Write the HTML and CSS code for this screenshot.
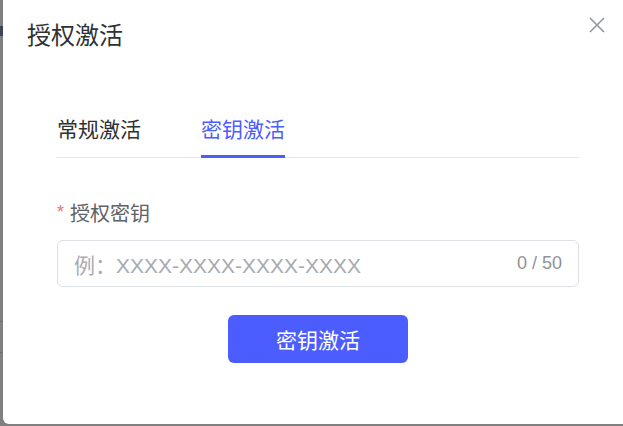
FILE: index.html
```html
<!DOCTYPE html>
<html lang="zh">
<head>
<meta charset="utf-8">
<title>授权激活</title>
<link rel="stylesheet" href="styles.css">
</head>
<body>
<div class="backdrop">
  <span class="bg-arrow"></span>
  <span class="bg-line bg-line-1"></span>
  <span class="bg-line bg-line-2"></span>
</div>
<div class="dialog">
  <div class="header">
    <span class="title">授权激活</span>
    <button class="close" aria-label="关闭">
      <svg width="16" height="16" viewBox="0 0 16 16"><path d="M1 1 L15 15 M15 1 L1 15" stroke="#909399" stroke-width="1.5" fill="none"/></svg>
    </button>
  </div>
  <div class="body">
    <div class="tabs">
      <div class="tab">常规激活</div>
      <div class="tab active">密钥激活</div>
    </div>
    <div class="form-item">
      <label class="label"><span class="req">*</span>授权密钥</label>
      <div class="input">
        <span class="placeholder">例：XXXX-XXXX-XXXX-XXXX</span>
        <span class="count">0 / 50</span>
      </div>
    </div>
    <div class="actions">
      <button class="btn">密钥激活</button>
    </div>
  </div>
</div>
</body>
</html>
```
FILE: styles.css
```css
html, body {
  margin: 0;
  padding: 0;
}
body {
  width: 623px;
  height: 426px;
  overflow: hidden;
  background: #808080;
  position: relative;
  font-family: "Liberation Sans", "Noto Sans CJK SC", sans-serif;
}
.backdrop {
  position: absolute;
  left: 0;
  top: 0;
  width: 3px;
  height: 426px;
}
.bg-arrow {
  position: absolute;
  left: 0;
  top: 26px;
  width: 3px;
  height: 10px;
  background: #3a4656;
}
.bg-line {
  position: absolute;
  left: 0;
  width: 3px;
  height: 1px;
  background: #6e6e6e;
}
.bg-line-1 { top: 321px; }
.bg-line-2 { top: 352px; }
.dialog {
  position: relative;
  margin-left: 3px;
  width: 630px;
  height: 424px;
  background: #fff;
  border-radius: 0 0 6px 6px;
  box-sizing: border-box;
}
.header {
  padding: 22px 24px 0;
}
.title {
  display: block;
  font-family: "Noto Sans CJK SC", sans-serif;
  font-size: 24px;
  line-height: 24px;
  color: #303133;
}
.close {
  position: absolute;
  right: 28px;
  top: 17px;
  width: 16px;
  height: 16px;
  padding: 0;
  border: 0;
  background: none;
  display: flex;
}
.body {
  padding: 0 54px;
}
.tabs {
  margin-top: 72px;
  display: flex;
  gap: 60px;
  border-bottom: 1px solid #e4e7ed;
}
.tab {
  position: relative;
  font-family: "Noto Sans CJK SC", sans-serif;
  font-size: 21px;
  line-height: 21px;
  padding-bottom: 18px;
  color: #303133;
}
.tab.active {
  color: #4c5dff;
}
.tab.active::after {
  content: "";
  position: absolute;
  left: 0;
  right: 0;
  bottom: -1px;
  height: 3px;
  background: #4c5dff;
}
.form-item {
  margin-top: 44px;
}
.label {
  display: flex;
  align-items: center;
  font-family: "Noto Sans CJK SC", sans-serif;
  font-size: 20px;
  line-height: 21px;
  color: #606266;
}
.req {
  color: #f56c6c;
  font-family: "Liberation Sans", sans-serif;
  font-size: 18px;
  margin-right: 6px;
}
.input {
  margin-top: 17px;
  height: 47px;
  box-sizing: border-box;
  border: 1px solid #dcdfe6;
  border-radius: 6px;
  padding: 0 16px;
  display: flex;
  align-items: center;
  justify-content: space-between;
}
.placeholder {
  font-size: 21px;
  color: #a8abb2;
}
.count {
  font-size: 18px;
  color: #909399;
}
.actions {
  margin-top: 28px;
  display: flex;
  justify-content: center;
}
.btn {
  width: 180px;
  height: 48px;
  border: 0;
  border-radius: 6px;
  background: #4c5dff;
  color: #fff;
  font-family: "Noto Sans CJK SC", sans-serif;
  font-size: 21px;
  padding: 0;
}
```
